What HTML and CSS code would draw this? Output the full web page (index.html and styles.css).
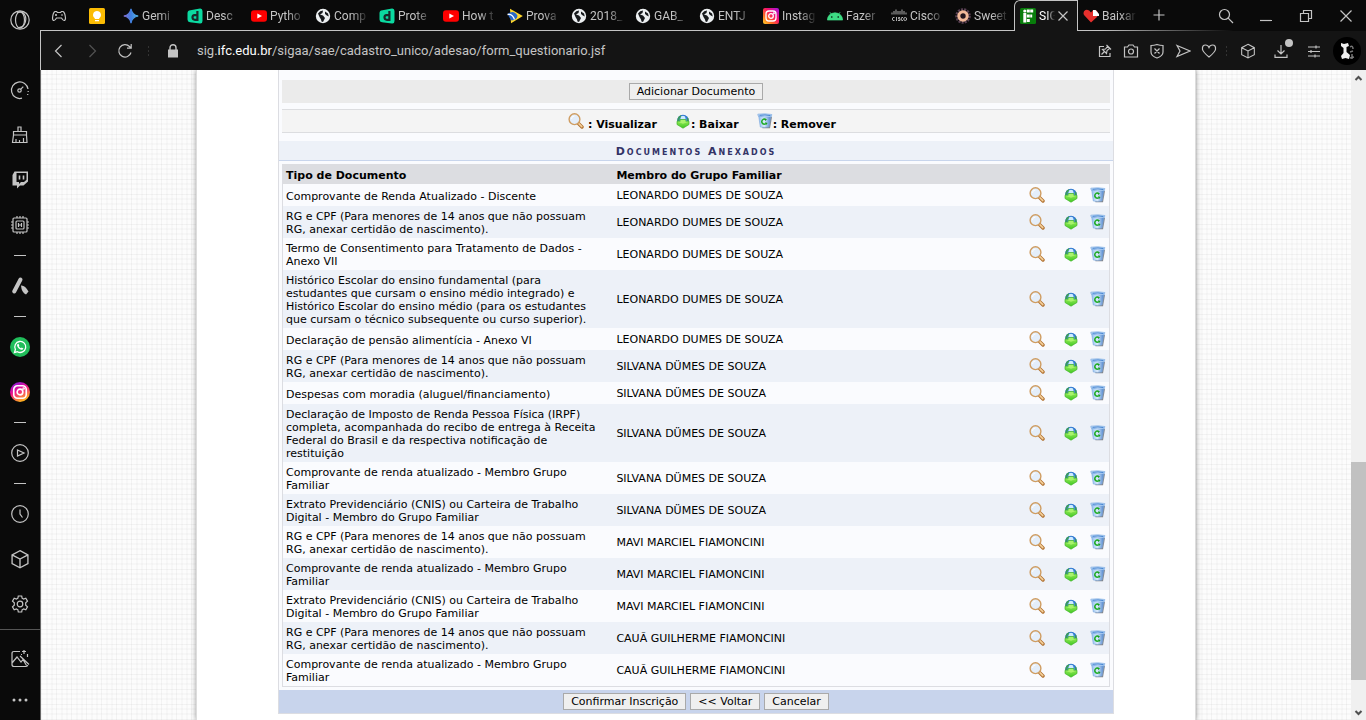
FILE: index.html
```html
<!DOCTYPE html>
<html lang="pt-BR">
<head>
<meta charset="utf-8">
<title>SIGAA - Cadastro Único</title>
<link rel="stylesheet" href="styles.css">
</head>
<body>
<svg class="defs" aria-hidden="true">
  <defs>
    <linearGradient id="gem" x1="0" x2="1"><stop offset="0" stop-color="#8b72d8"/><stop offset=".5" stop-color="#3f7fe0"/><stop offset="1" stop-color="#56b8e6"/></linearGradient>
    <linearGradient id="ig" x1="0" y1="1" x2="1" y2="0"><stop offset="0" stop-color="#ffd52e"/><stop offset=".3" stop-color="#ff6a1f"/><stop offset=".6" stop-color="#f5126c"/><stop offset="1" stop-color="#a012e8"/></linearGradient>
    <linearGradient id="ig2" x1="0" y1="0" x2=".5" y2="1"><stop offset="0" stop-color="#6a1cf0"/><stop offset=".5" stop-color="#f0108c"/><stop offset="1" stop-color="#ffb01f"/></linearGradient>
    <linearGradient id="leaf" x1="0" y1="0" x2="0" y2="1"><stop offset="0" stop-color="#a4f060"/><stop offset="1" stop-color="#3fc823"/></linearGradient>
    <linearGradient id="bin" x1="0" x2="1"><stop offset="0" stop-color="#8fbdf0"/><stop offset=".45" stop-color="#dcecfc"/><stop offset="1" stop-color="#4a82cc"/></linearGradient>
    <radialGradient id="sea"><stop offset="0" stop-color="#8fd0ff"/><stop offset="1" stop-color="#1c68c8"/></radialGradient>
  </defs>
  <symbol id="i-view" viewBox="0 0 16 16"><path d="M10.500 10.500l3.500 3.500" stroke="#b0702f" stroke-width="3.400" stroke-linecap="round"/><path d="M10.800 10.600l3 3" stroke="#f4d09a" stroke-width="1.600" stroke-linecap="round"/><circle cx="6.500" cy="6.200" r="5.400" fill="#e4eefa" stroke="#cf9d62" stroke-width="1.400"/><path d="M3.500 6a3 3 0 0 1 3-3" stroke="#fff" fill="none"/></symbol>
  <symbol id="i-down" viewBox="0 0 16 16"><circle cx="8" cy="7.500" r="5.800" fill="url(#sea)"/><path d="M2.300 8Q2.300 3.500 6 2.200L6.500 4 4.500 5.500V8zM12 4.500l1.500 1 .2 2.500H12z" fill="#3a9a5c"/><path d="M6 3.500q2-1.500 4 0l.5 2.500h-5z" fill="#cdeaff"/><path d="M5.300 6.500h5.400v1.800H14v3.200L8 15.200l-6-3.700V8.300h3.300z" fill="url(#leaf)" stroke="#42b52a" stroke-width=".7"/><path d="M5.600 6.900h4.800v1.800h2.900L8 10.800 2.700 8.700h2.900z" fill="#a8f36c"/></symbol>
  <symbol id="i-bin" viewBox="0 0 16 16"><path d="M4 5l1.500 10.300h7.500L15 4z" fill="#5e6268" opacity=".75"/><path d="M1.700 3l1.600 11q4 .9 8.700 0L13.900 3z" fill="url(#bin)" stroke="#7ba6dc" stroke-width=".6"/><path d="M.8 1.200q7-1 14 .3l-.5 2.200Q7 4.500 1.200 3z" fill="#cfe5fb" stroke="#6b9fdd" stroke-width=".6"/><path d="M2.500 2.300q5.500-.8 11 .2" stroke="#2b72c8" stroke-width=".9" fill="none"/><path d="M8.600 6.500A2.500 2.500 0 1 0 8.800 10.700" stroke="#22ad28" stroke-width="1.500" fill="none"/><path d="M7.200 5.400l2.800.8-1.700 1.700zM8 9.200l2.600.8-1.500 1.900z" fill="#18a01e"/></symbol>
  <symbol id="i-globe" viewBox="0 0 16 16"><circle cx="8" cy="8" r="7.200" fill="#eceff1"/><path d="M3 5.500Q5 2.500 8 2.400L7.500 5 5 6.500 8 7.500l2 2.500-2 4q-2 0-2-2.500L4.500 9zM10 3.500l3 2 .8 3-2-1L10 6z" fill="#16191c"/></symbol>
  <symbol id="i-d" viewBox="0 0 16 16"><path d="M3.500 2.200L13 .5Q15.500.3 15.500 3v10q0 2.700-2.500 2.500L3 14.200Q.5 14 .5 11.500V5q0-2.500 3-2.800z" fill="#0bd9a0"/><path d="M10.400 3v10M10.400 7.200H7.500Q5.500 7.400 5.500 9.500q.2 2.300 2.500 2.300h2.400" stroke="#16282a" stroke-width="2.200" fill="none"/></symbol>
  <symbol id="i-yt" viewBox="0 0 16 16"><rect y="2.300" width="16" height="11.500" rx="3" fill="#f00"/><path d="M6.300 5.400v5.200L11 8z" fill="#fff"/></symbol>
  <symbol id="i-cube" viewBox="0 0 24 24"><path stroke-width="1.600" d="M12 2l9.500 5v10.500L12 22.500l-9.500-5V7zM2.500 7L12 12l9.500-5M12 12v10.500"/></symbol>
  <symbol id="i-insta" viewBox="0 0 16 16"><rect x="3" y="3" width="10" height="10" rx="3"/><circle cx="8" cy="8" r="2.300"/><circle cx="10.900" cy="5.200" r=".4"/></symbol>
</svg>

<div class="browser">
  <aside class="sidebar" aria-label="Barra lateral">
    <button class="side side-logo" aria-label="Menu Opera"><svg class="line" viewBox="0 0 20 20"><circle cx="10" cy="10" r="9.200"/><ellipse cx="10" cy="10" rx="4.500" ry="8.200"/><path d="M7 2.500Q13 .5 15.300 6q1.400 4-1 8.500-2 3.500-6.500 3"/></svg></button>
    <button class="side" aria-label="GX Control"><svg class="line" viewBox="0 0 20 20"><path d="M12 18.200A8.300 8.300 0 1 1 18 9"/><path d="M18.200 11v1M17.700 14v1" /><circle cx="9.500" cy="10.500" r="1.700"/><path d="M10.800 9.200l2.500-2.500"/></svg></button>
    <button class="side" aria-label="Limpador"><svg class="line" viewBox="0 0 20 20"><path d="M8 6V2h3v4M3.500 6.500h13V10h-13zM3.500 10l-1 7.500h14.500l-.5-7.500M6 17v-3M9.500 17v-2M13.500 17v-4"/></svg></button>
    <button class="side" aria-label="Twitch"><svg viewBox="0 0 20 20"><path fill="#c4c4c4" fill-rule="evenodd" d="M4.500 1.500H18v10l-4.500 4H10l-3 3v-3H2.500V5zM6.500 3v9h2.500v2l2-2h3l2.500-2.300V3z"/><path d="M9.500 5.500v4M13.500 5.500v4" stroke="#c4c4c4" stroke-width="1.600"/></svg></button>
    <button class="side" aria-label="Mods"><svg class="line" viewBox="0 0 20 20"><rect x="3" y="3" width="14" height="14" rx="1"/><rect x="6" y="6" width="8" height="8" rx="1"/><path d="M8.500 8v4M11.500 8v4M8.500 10h3M7 1v2M10 1v2M13 1v2M7 17v2M10 17v2M13 17v2M1 7h2M1 10h2M1 13h2M17 7h2M17 10h2M17 13h2"/></svg></button>
    <span class="dash"></span>
    <button class="side" aria-label="Aria"><svg viewBox="0 0 20 20"><path d="M10.500 3.500L4.200 15.500" stroke="#c4c4c4" stroke-width="4" stroke-linecap="round"/><path d="M11 9.500q4-.5 7.500 6l-2.500 3q-4.500-2-5-9z" fill="#c4c4c4"/></svg></button>
    <span class="dash"></span>
    <button class="side" aria-label="WhatsApp"><svg viewBox="0 0 20 20"><circle cx="10" cy="10" r="10" fill="#20bd5a"/><path d="M4.500 15.500l.9-3A5.500 5.500 0 1 1 7.500 14.700z" fill="none" stroke="#fff" stroke-width="1.300"/><path d="M7.500 7l1-.3.800 1.800-.5.700q.8 1.500 2.200 2l.7-.7 1.700.9q-.5 1.600-2 1.400Q8 12 7 8.500z" fill="#fff"/></svg></button>
    <button class="side" aria-label="Instagram"><svg viewBox="0 0 16 16"><circle cx="8" cy="8" r="8" fill="url(#ig2)"/><use href="#i-insta" class="ig-line"/></svg></button>
    <span class="dash"></span>
    <button class="side" aria-label="Player"><svg class="line" viewBox="0 0 20 20"><circle cx="10" cy="10" r="8.300"/><path d="M7.500 7l6.500 3-6.500 3z"/></svg></button>
    <span class="dash"></span>
    <button class="side" aria-label="Histórico"><svg class="line" viewBox="0 0 20 20"><circle cx="10" cy="10" r="8.300"/><path d="M10 5.500V10l2.500 3.500"/></svg></button>
    <button class="side" aria-label="Extensões"><svg class="line"><use href="#i-cube"/></svg></button>
    <button class="side" aria-label="Configurações"><svg class="line" viewBox="0 0 20 20"><circle cx="10" cy="10" r="2.800"/><path d="M8.300 2h3.400l.4 2.200 1.500.9 2.200-.8 1.700 2.900-1.800 1.500v2.600l1.800 1.500-1.700 2.900-2.200-.8-1.500.9-.4 2.200H8.300l-.4-2.200-1.500-.9-2.200.8-1.700-2.900 1.800-1.500V8.700L2.500 7.200l1.700-2.900 2.200.8 1.500-.9z"/></svg></button>
    <div class="side-bottom">
      <button class="side side-low" aria-label="Papel de parede"><svg class="line" viewBox="0 0 20 20"><path d="M10 2.500H4q-2 0-2 2v11q0 2 2 2h12q1.500 0 1.700-1.500M2 14l5-6 4 5 2-2.500 3.500 6M10 7l9 8.500M12 2.500h4M14 1v4M17.500 5v3M11 5.500h1"/></svg></button>
      <button class="side side-low" aria-label="Mais"><svg viewBox="0 0 20 20"><g fill="#c4c4c4"><circle cx="4" cy="10" r="1.500"/><circle cx="10" cy="10" r="1.500"/><circle cx="16" cy="10" r="1.500"/></g></svg></button>
    </div>
  </aside>

  <div class="window">
    <header class="tabs">
      <div class="strip">
        <button class="pin" aria-label="GX Corner"><svg class="line" viewBox="0 0 16 16"><path d="M4 3.500h1.500l1 1h3l1-1H12q2 1 2.500 6.500 0 2.500-1.500 2.500-1 0-2.500-2.500h-5Q4 12.500 3 12.500q-1.500 0-1.500-2.500Q2 4.500 4 3.500z"/><path d="M5 6v2M4 7h2M10 7h2"/></svg></button>
        <button class="pin" aria-label="Google Keep"><svg viewBox="0 0 16 16"><rect width="16" height="16" rx="1.500" fill="#fbbc04"/><path d="M8 3a4 4 0 0 1 2.200 7.300v.7H5.800v-.7A4 4 0 0 1 8 3zM6 12h4v1.300H6z" fill="#fff"/></svg></button>
        <button class="tab"><svg viewBox="0 0 16 16"><path d="M8 .8Q9 7 15.200 8 9 9 8 15.200 7 9 .8 8 7 7 8 .8z" fill="url(#gem)" stroke="url(#gem)" stroke-width="1.200"/></svg><span>Gemi</span></button>
        <button class="tab"><svg><use href="#i-d"/></svg><span>Desc</span></button>
        <button class="tab"><svg><use href="#i-yt"/></svg><span>Pytho</span></button>
        <button class="tab"><svg><use href="#i-globe"/></svg><span>Comp</span></button>
        <button class="tab"><svg><use href="#i-d"/></svg><span>Prote</span></button>
        <button class="tab"><svg><use href="#i-yt"/></svg><span>How t</span></button>
        <button class="tab"><svg viewBox="0 0 16 16"><path d="M3 .8L15.800 8 4 15.200z" fill="#ffd72b"/><path d="M1 5.500q6-4 9.500 2.200Q10 12 4.500 12.500 1.500 9.500 1 5.500z" fill="#2968c7"/><path d="M.5 6.500q5-1 7 5" stroke="#fff" stroke-width="1.300" fill="none"/></svg><span>Prova</span></button>
        <button class="tab"><svg><use href="#i-globe"/></svg><span>2018_</span></button>
        <button class="tab"><svg><use href="#i-globe"/></svg><span>GAB_</span></button>
        <button class="tab"><svg><use href="#i-globe"/></svg><span>ENTJ</span></button>
        <button class="tab"><svg viewBox="0 0 16 16"><rect width="16" height="16" rx="2" fill="url(#ig)"/><use href="#i-insta" class="ig-line"/></svg><span>Instag</span></button>
        <button class="tab"><svg viewBox="0 0 16 16"><path d="M.3 12Q1 5.200 8 4.800 15 5.200 15.700 12zM4.300 6.500L2.800 4M11.700 6.500L13.200 4" fill="#3ddc84" stroke="#3ddc84" stroke-width=".7"/><circle cx="4.800" cy="9" r=".8"/><circle cx="11.200" cy="9" r=".8"/></svg><span>Fazer</span></button>
        <button class="tab"><svg viewBox="0 0 16 16"><path d="M1 4.500v2M3 3v3.500M5 1.500v5M7 3v3.500M9 3v3.500M11 1.500v5M13 3v3.500M15 4.500v2M3.500 9.500H2q-1.500 1.500 0 3h1.500M5.500 9v4M9 9.500H7.500v1.300H9v1.700H7M12 9.500h-1.300q-1 1.500 0 3H12" stroke="#c0c0c0" fill="none" stroke-width=".9"/><circle cx="14.200" cy="11" r="1.500" stroke="#c0c0c0" fill="none" stroke-width=".9"/></svg><span>Cisco</span></button>
        <button class="tab"><svg viewBox="0 0 16 16"><circle cx="8" cy="8" r="6.300" fill="none" stroke="#594053" stroke-width="3" stroke-dasharray="2 1"/><circle cx="8" cy="8" r="4.200" fill="#23151e" stroke="#f2b999" stroke-width="3"/></svg><span>Sweet</span></button>
        <button class="tab tab-on"><svg viewBox="0 0 16 16"><rect width="16" height="16" rx="1.500" fill="#087d0b"/><g fill="#fff"><circle cx="4.800" cy="3" r="1.600"/><rect x="3.300" y="5" width="3" height="9.500"/><rect x="6.800" y="1.500" width="3" height="3"/><rect x="10.200" y="1.500" width="3" height="3"/><rect x="6.800" y="6.500" width="3" height="3"/><rect x="10.200" y="6.500" width="2" height="3"/><rect x="6.800" y="11" width="3" height="3"/></g></svg><span>SIG</span><svg class="line tab-x" viewBox="0 0 10 10"><path d="M.5.5l9 9M9.500.5l-9 9"/></svg></button>
        <button class="tab"><svg viewBox="0 0 16 16"><path d="M8 14.500L1 7Q-.5 3.500 2.500 2 6 1 8 4.500 10 1 13.500 2.500 16.500 5 14 9z" fill="#e6302d"/><path d="M10 2h2.500L16 6v2h-6z" fill="#fff"/></svg><span>Baixar</span></button>
        <button class="new" aria-label="Nova guia"><svg class="line" viewBox="0 0 12 12"><path d="M6 .5v11M.5 6h11"/></svg></button>
      </div>
      <div class="controls">
        <button aria-label="Pesquisar"><svg class="line" viewBox="0 0 16 16"><circle cx="6.500" cy="6.500" r="5"/><path d="M10.200 10.200l4.800 4.800"/></svg></button>
        <button aria-label="Minimizar"><svg class="line" viewBox="0 0 16 16"><path d="M2 12.500h12"/></svg></button>
        <button aria-label="Restaurar"><svg class="line" viewBox="0 0 16 16"><path d="M2.500 5.500h8v8h-8zM5.500 5.500v-3h8v8h-3"/></svg></button>
        <button aria-label="Fechar"><svg class="line" viewBox="0 0 16 16"><path d="M2.500 2.500l11 11M13.500 2.500l-11 11"/></svg></button>
      </div>
    </header>

    <nav class="address">
      <div class="nav">
        <button aria-label="Voltar"><svg class="line" viewBox="0 0 16 16"><path d="M10.500 2L4.500 8l6 6"/></svg></button>
        <button aria-label="Avançar" class="dim"><svg class="line" viewBox="0 0 16 16"><path d="M5.500 2l6 6-6 6"/></svg></button>
        <button aria-label="Recarregar"><svg class="line" viewBox="0 0 16 16"><path d="M14 9.500A6.200 6.200 0 1 1 12.500 3.500L14 5M14.200 1v4.200H10"/></svg></button>
      </div>
      <span class="dots"></span>
      <svg class="lock" viewBox="0 0 12 14"><path d="M1 5.500h10v8H1z" fill="#c4c4c4"/><path d="M3 6V3.700a3 3 0 0 1 6 0V6" stroke="#c4c4c4" stroke-width="1.400" fill="none"/></svg>
      <div class="url" role="textbox" aria-label="Endereço" contenteditable="true" spellcheck="false">sig.<b>ifc.edu.br</b>/sigaa/sae/cadastro_unico/adesao/form_questionario.jsf</div>
      <div class="tools">
        <button aria-label="Fixar"><svg class="line" viewBox="0 0 16 16"><path d="M7 3.500H2.500v10h10.500V10M9.500 2l4.500 4.500M10.500 3.500L8.500 6l-3 .5 4 4 .5-3 2.500-2M7.500 8.500l-3 3"/></svg></button>
        <button aria-label="Captura"><svg class="line" viewBox="0 0 16 16"><path d="M1.500 4h3L6 2h4l1.500 2h3v10h-13z"/><circle cx="8" cy="8.500" r="2.500"/></svg></button>
        <button aria-label="Bloqueador"><svg class="line" viewBox="0 0 16 16"><path d="M8 1.500q3 1 6 1V9q0 4-6 6-6-2-6-6V2.500q3 0 6-1zM5.500 5.500l5 5M10.500 5.500l-5 5"/></svg></button>
        <button aria-label="Enviar"><svg class="line" viewBox="0 0 16 16"><path d="M2 2.500L15 8 2 13.500 5 8z"/></svg></button>
        <button aria-label="Favorito"><svg class="line" viewBox="0 0 16 16"><path d="M8 14Q2 9 1.500 6.500 1 2 4.500 2 7 2 8 4.500 9 2 11.500 2 15 2 14.500 6.500 14 9 8 14z"/></svg></button>
      </div>
      <span class="dots"></span>
      <div class="tools tools-wide">
        <button aria-label="Extensões"><svg class="line"><use href="#i-cube"/></svg></button>
        <button aria-label="Downloads" class="dl"><svg class="line" viewBox="0 0 16 16"><path d="M8 2v9M4.500 7.500L8 11l3.500-3.500M2 11.500v2.800h12v-2.800"/></svg></button>
        <button aria-label="Ajustes"><svg class="line" viewBox="0 0 16 16"><path d="M2 4h12M2 8.500h12M2 13h12M10 2.500v3M5 7v3M9 11.500v3"/></svg></button>
        <button aria-label="Perfil"><svg class="avatar" viewBox="0 0 28 28"><circle cx="14" cy="14" r="14" fill="#000"/><path d="M8 6l3 1 4-1 1 3-2.500 1v5l3.500 3-1 4-3.500-1-3.500 1-1-3 2.500-3v-5L8 9z" fill="#eee"/><path d="M17 10q3-2 3 2M17 15l3-1M19 17v5M17 21l4-1" stroke="#777" stroke-width="1.500" fill="none"/></svg></button>
      </div>
    </nav>

    <div class="viewport">
      <div class="canvas">
        <main class="page">
          <form class="form">
            <div class="add"><button type="button" class="btn">Adicionar Documento</button></div>
            <div class="legend">
              <span><svg class="ico"><use href="#i-view"/></svg> : Visualizar</span>
              <span><svg class="ico"><use href="#i-down"/></svg>: Baixar</span>
              <span><svg class="ico"><use href="#i-bin"/></svg>: Remover</span>
            </div>
            <h2 class="caption" id="docs">Documentos Anexados</h2>
            <table class="docs" aria-labelledby="docs">
              <colgroup><col class="c-type"><col><col class="c-view"><col class="c-down"><col class="c-bin"></colgroup>
              <thead><tr><th>Tipo de Documento</th><th colspan="4">Membro do Grupo Familiar</th></tr></thead>
              <tbody>
                <tr><td>Comprovante de Renda Atualizado - Discente</td><td>LEONARDO DUMES DE SOUZA</td><td><a href="#" aria-label="Visualizar"><svg class="ico"><use href="#i-view"/></svg></a></td><td><a href="#" aria-label="Baixar"><svg class="ico"><use href="#i-down"/></svg></a></td><td><a href="#" aria-label="Remover"><svg class="ico"><use href="#i-bin"/></svg></a></td></tr>
                <tr><td>RG e CPF (Para menores de 14 anos que não possuam RG, anexar certidão de nascimento).</td><td>LEONARDO DUMES DE SOUZA</td><td><a href="#" aria-label="Visualizar"><svg class="ico"><use href="#i-view"/></svg></a></td><td><a href="#" aria-label="Baixar"><svg class="ico"><use href="#i-down"/></svg></a></td><td><a href="#" aria-label="Remover"><svg class="ico"><use href="#i-bin"/></svg></a></td></tr>
                <tr><td>Termo de Consentimento para Tratamento de Dados - Anexo VII</td><td>LEONARDO DUMES DE SOUZA</td><td><a href="#" aria-label="Visualizar"><svg class="ico"><use href="#i-view"/></svg></a></td><td><a href="#" aria-label="Baixar"><svg class="ico"><use href="#i-down"/></svg></a></td><td><a href="#" aria-label="Remover"><svg class="ico"><use href="#i-bin"/></svg></a></td></tr>
                <tr><td>Histórico Escolar do ensino fundamental (para estudantes que cursam o ensino médio integrado) e Histórico Escolar do ensino médio (para os estudantes que cursam o técnico subsequente ou curso superior).</td><td>LEONARDO DUMES DE SOUZA</td><td><a href="#" aria-label="Visualizar"><svg class="ico"><use href="#i-view"/></svg></a></td><td><a href="#" aria-label="Baixar"><svg class="ico"><use href="#i-down"/></svg></a></td><td><a href="#" aria-label="Remover"><svg class="ico"><use href="#i-bin"/></svg></a></td></tr>
                <tr><td>Declaração de pensão alimentícia - Anexo VI</td><td>LEONARDO DUMES DE SOUZA</td><td><a href="#" aria-label="Visualizar"><svg class="ico"><use href="#i-view"/></svg></a></td><td><a href="#" aria-label="Baixar"><svg class="ico"><use href="#i-down"/></svg></a></td><td><a href="#" aria-label="Remover"><svg class="ico"><use href="#i-bin"/></svg></a></td></tr>
                <tr><td>RG e CPF (Para menores de 14 anos que não possuam RG, anexar certidão de nascimento).</td><td>SILVANA DÜMES DE SOUZA</td><td><a href="#" aria-label="Visualizar"><svg class="ico"><use href="#i-view"/></svg></a></td><td><a href="#" aria-label="Baixar"><svg class="ico"><use href="#i-down"/></svg></a></td><td><a href="#" aria-label="Remover"><svg class="ico"><use href="#i-bin"/></svg></a></td></tr>
                <tr><td>Despesas com moradia (aluguel/financiamento)</td><td>SILVANA DÜMES DE SOUZA</td><td><a href="#" aria-label="Visualizar"><svg class="ico"><use href="#i-view"/></svg></a></td><td><a href="#" aria-label="Baixar"><svg class="ico"><use href="#i-down"/></svg></a></td><td><a href="#" aria-label="Remover"><svg class="ico"><use href="#i-bin"/></svg></a></td></tr>
                <tr><td>Declaração de Imposto de Renda Pessoa Física (IRPF) completa, acompanhada do recibo de entrega à Receita Federal do Brasil e da respectiva notificação de restituição</td><td>SILVANA DÜMES DE SOUZA</td><td><a href="#" aria-label="Visualizar"><svg class="ico"><use href="#i-view"/></svg></a></td><td><a href="#" aria-label="Baixar"><svg class="ico"><use href="#i-down"/></svg></a></td><td><a href="#" aria-label="Remover"><svg class="ico"><use href="#i-bin"/></svg></a></td></tr>
                <tr><td>Comprovante de renda atualizado - Membro Grupo Familiar</td><td>SILVANA DÜMES DE SOUZA</td><td><a href="#" aria-label="Visualizar"><svg class="ico"><use href="#i-view"/></svg></a></td><td><a href="#" aria-label="Baixar"><svg class="ico"><use href="#i-down"/></svg></a></td><td><a href="#" aria-label="Remover"><svg class="ico"><use href="#i-bin"/></svg></a></td></tr>
                <tr><td>Extrato Previdenciário (CNIS) ou Carteira de Trabalho Digital - Membro do Grupo Familiar</td><td>SILVANA DÜMES DE SOUZA</td><td><a href="#" aria-label="Visualizar"><svg class="ico"><use href="#i-view"/></svg></a></td><td><a href="#" aria-label="Baixar"><svg class="ico"><use href="#i-down"/></svg></a></td><td><a href="#" aria-label="Remover"><svg class="ico"><use href="#i-bin"/></svg></a></td></tr>
                <tr><td>RG e CPF (Para menores de 14 anos que não possuam RG, anexar certidão de nascimento).</td><td>MAVI MARCIEL FIAMONCINI</td><td><a href="#" aria-label="Visualizar"><svg class="ico"><use href="#i-view"/></svg></a></td><td><a href="#" aria-label="Baixar"><svg class="ico"><use href="#i-down"/></svg></a></td><td><a href="#" aria-label="Remover"><svg class="ico"><use href="#i-bin"/></svg></a></td></tr>
                <tr><td>Comprovante de renda atualizado - Membro Grupo Familiar</td><td>MAVI MARCIEL FIAMONCINI</td><td><a href="#" aria-label="Visualizar"><svg class="ico"><use href="#i-view"/></svg></a></td><td><a href="#" aria-label="Baixar"><svg class="ico"><use href="#i-down"/></svg></a></td><td><a href="#" aria-label="Remover"><svg class="ico"><use href="#i-bin"/></svg></a></td></tr>
                <tr><td>Extrato Previdenciário (CNIS) ou Carteira de Trabalho Digital - Membro do Grupo Familiar</td><td>MAVI MARCIEL FIAMONCINI</td><td><a href="#" aria-label="Visualizar"><svg class="ico"><use href="#i-view"/></svg></a></td><td><a href="#" aria-label="Baixar"><svg class="ico"><use href="#i-down"/></svg></a></td><td><a href="#" aria-label="Remover"><svg class="ico"><use href="#i-bin"/></svg></a></td></tr>
                <tr><td>RG e CPF (Para menores de 14 anos que não possuam RG, anexar certidão de nascimento).</td><td>CAUÃ GUILHERME FIAMONCINI</td><td><a href="#" aria-label="Visualizar"><svg class="ico"><use href="#i-view"/></svg></a></td><td><a href="#" aria-label="Baixar"><svg class="ico"><use href="#i-down"/></svg></a></td><td><a href="#" aria-label="Remover"><svg class="ico"><use href="#i-bin"/></svg></a></td></tr>
                <tr><td>Comprovante de renda atualizado - Membro Grupo Familiar</td><td>CAUÃ GUILHERME FIAMONCINI</td><td><a href="#" aria-label="Visualizar"><svg class="ico"><use href="#i-view"/></svg></a></td><td><a href="#" aria-label="Baixar"><svg class="ico"><use href="#i-down"/></svg></a></td><td><a href="#" aria-label="Remover"><svg class="ico"><use href="#i-bin"/></svg></a></td></tr>
              </tbody>
            </table>
            <div class="actions">
              <button type="button" class="btn">Confirmar Inscrição</button>
              <button type="button" class="btn">&lt;&lt; Voltar</button>
              <button type="button" class="btn">Cancelar</button>
            </div>
          </form>
        </main>
      </div>
      <div class="scroll" aria-hidden="true">
        <svg class="arrow" viewBox="0 0 15 17"><path d="M4.500 10l3-3 3 3" /></svg>
        <div class="before"></div>
        <div class="thumb"></div>
        <div class="after"></div>
        <svg class="arrow" viewBox="0 0 15 17"><path d="M4.500 8l3 3 3-3" /></svg>
      </div>
    </div>
  </div>
</div>
</body>
</html>
```
FILE: styles.css
```css
* { box-sizing: border-box; }
body { margin: 0; font-family: Roboto, "Noto Sans", sans-serif; }
button { font: inherit; color: inherit; background: none; border: 0; padding: 0; margin: 0; }
.defs { position: absolute; width: 0; height: 0; }
.line { fill: none; stroke: #c4c4c4; stroke-width: 1.2; }
.ig-line { fill: none; stroke: #fff; stroke-width: 1.3; }

.browser { display: flex; height: 100vh; overflow: hidden; background: #0a0a0a; color: #c4c4c4; }

/* Sidebar */
.sidebar { display: flex; flex-direction: column; flex: none; width: 40px; }
.side { display: flex; align-items: center; justify-content: center; flex: none; height: 45px; }
.side svg { width: 20px; height: 20px; }
.side-logo { height: 40px; margin-bottom: 27px; }
.dash { display: flex; align-items: center; justify-content: center; flex: none; height: 16px; }
.dash::before { content: ""; width: 12px; height: 1px; background: #c4c4c4; }
.side-bottom { display: flex; flex-direction: column; margin-top: auto; padding: 8px 0 0; border-top: 1px solid #555; }
.side-low { height: 41px; }

/* Tab strip */
.window { display: flex; flex-direction: column; flex: 1; min-width: 0; }
.tabs { display: flex; justify-content: space-between; flex: none; height: 31px; background: linear-gradient(90deg, #c4c4c4 0 80%, transparent 90%) bottom / 100% 1px no-repeat; }
.strip { display: flex; }
.pin, .tab { display: flex; align-items: center; height: 31px; }
.pin { justify-content: center; width: 38px; }
.pin + .tab { margin-left: 2px; }
.pin svg, .tab svg { flex: none; width: 16px; height: 16px; }
.tab { gap: 3px; width: 64px; padding: 0 5px; font-size: 12px; line-height: 16px; }
.tab span { flex: 1; min-width: 0; overflow: hidden; white-space: nowrap; text-align: left; -webkit-mask: linear-gradient(90deg, #000 50%, transparent); mask: linear-gradient(90deg, #000 50%, transparent); }
.tab-on { padding: 0 9px 0 5px; border: 1px solid #c4c4c4; border-bottom: 0; border-top-left-radius: 6px; background: #141414; color: #fff; }
.tab svg.tab-x { width: 10px; height: 10px; }
.new { width: 34px; }
.new svg { width: 12px; height: 12px; }
.controls { display: flex; }
.controls button { display: flex; align-items: center; justify-content: center; width: 40px; }
.controls svg { width: 16px; height: 16px; }

/* Address bar */
.address { display: flex; align-items: center; flex: none; height: 39px; background: #141414; border-left: 1px solid #c4c4c4; }
.address button { display: flex; align-items: center; justify-content: center; height: 32px; }
.address svg { width: 16px; height: 16px; }
.nav { display: flex; padding-left: 1px; }
.nav button { width: 33px; }
.dim { opacity: .35; }
.dots { flex: none; width: 9px; height: 10px; background: linear-gradient(90deg, transparent 4px, #333 4px 5px, transparent 5px); -webkit-mask: linear-gradient(#000 2px, transparent 2px) 0 0 / 100% 4px; mask: linear-gradient(#000 2px, transparent 2px) 0 0 / 100% 4px; }
.nav + .dots { margin: 0 14px 0 3px; }
.address .lock { width: 12px; height: 14px; }
.url { flex: 1; min-width: 0; margin-left: 18px; font-size: 13px; line-height: 20px; white-space: nowrap; outline: 0; }
.url b { font-weight: 400; color: #fff; }
.tools { display: flex; }
.tools button { width: 26px; }
.tools-wide { padding-right: 3px; }
.tools-wide button { width: 33px; }
.dl { position: relative; }
.dl::after { content: ""; position: absolute; top: 4px; right: 4px; width: 8px; height: 8px; border-radius: 50%; background: #c4c4c4; }
.address .avatar { width: 28px; height: 28px; }

/* Web page */
.viewport { display: flex; flex: 1; min-height: 0; border-left: 1px solid #666; background: #fff; }
.canvas {
  flex: 1; min-width: 0; overflow: hidden;
  background:
    repeating-linear-gradient(0deg, rgba(0,0,0,.04) 0 1px, transparent 1px 5px, rgba(0,0,0,.02) 5px 7px, transparent 7px 10px, rgba(0,0,0,.02) 10px 12px, transparent 12px 15px),
    repeating-linear-gradient(90deg, rgba(0,0,0,.04) 0 1px, transparent 1px 5px, rgba(0,0,0,.02) 5px 7px, transparent 7px 10px, rgba(0,0,0,.02) 10px 12px, transparent 12px 15px),
    #fcfcfc;
}
.page { max-width: 1000px; min-height: 100%; margin: 0 auto; padding: 0 81px; background: #fff; border: solid #ddd; border-width: 0 1px; box-shadow: 0 0 5px rgba(0,0,0,.4); font-family: Verdana, "DejaVu Sans", sans-serif; font-size: 11px; line-height: 13px; color: #000; }
.form { border: 1px solid #dcdde2; border-top: 0; background: #fafbfe; padding-top: 10px; }
.add { display: flex; align-items: center; justify-content: center; height: 23px; margin: 0 3px 6px; background: #ebebeb; }
.btn { height: 17px; padding: 0 7px; border: 1px solid #a9a9a9; background: #efefef; line-height: 15px; white-space: nowrap; }
.legend { display: flex; justify-content: center; gap: 18px; height: 24px; margin: 0 3px 8px; padding: 4px 0 0 12px; background: #f4f4f4; border: solid #dcdde0; border-width: 1px 0; font-weight: 700; }
.legend span { display: flex; align-items: flex-end; height: 17px; white-space: pre; }
.legend .ico { margin-bottom: 2px; }
.ico { display: block; flex: none; width: 16px; height: 16px; }
.caption { margin: 0 0 3px; height: 20px; padding-top: 1px; background: #edf1f8; border-bottom: 1px solid #c8d5ec; color: #333366; font-size: 11px; line-height: 20px; font-variant: small-caps; letter-spacing: 2px; text-align: center; }
.docs { width: calc(100% - 6px); margin: 0 3px 3px; table-layout: fixed; border-collapse: separate; border-spacing: 0; border: 1px solid #dcdde2; border-top: 0; }
.c-type { width: 40%; }
.c-view { width: 34px; }
.c-down { width: 27px; }
.c-bin { width: 19px; }
.docs th { height: 20px; padding: 4px 3px 2px; background: #dcdde1; text-align: left; }
.docs td { padding: 3px; }
.docs td:first-child { padding: 4px 8px 2px 3px; }
.docs td:nth-child(n+3) { padding: 3px 0; }
.docs tbody tr:nth-child(even) { background: #edf1f8; }
.actions { display: flex; align-items: center; justify-content: center; gap: 4px; height: 23px; background: #c8d4ec; }

/* Scrollbar */
.scroll { display: flex; flex-direction: column; flex: none; width: 15px; background: #f0f0f0; }
.arrow { flex: none; width: 15px; height: 17px; fill: none; stroke: #505050; stroke-width: 2; }
.before { flex: 375; }
.thumb { flex: 218; background: #c1c1c1; }
.after { flex: 23; }
```
